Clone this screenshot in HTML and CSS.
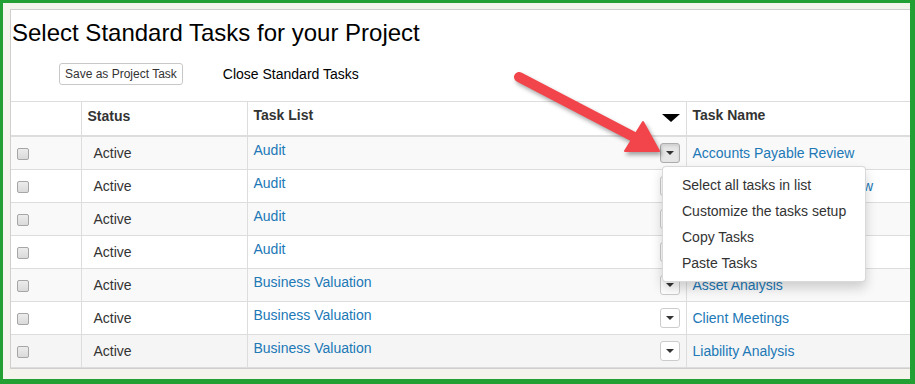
FILE: index.html
```html
<!DOCTYPE html>
<html lang="en">
<head>
    <meta charset="UTF-8">
    <meta name="viewport" content="width=device-width, initial-scale=1.0">
    <title>Select Standard Tasks</title>
    <link rel="stylesheet" href="styles.css">
</head>
<body>

    <div class="frame">
        <div class="panel">
            <h1 class="title">Select Standard Tasks for your Project</h1>

            <div class="toolbar">
                <button class="btn-save">Save as Project Task</button>
                <span class="close-link">Close Standard Tasks</span>
            </div>

            <table class="tasks">
                <colgroup>
                    <col class="col-check">
                    <col class="col-status">
                    <col class="col-list">
                    <col class="col-name">
                </colgroup>
                <thead>
                    <tr>
                        <th></th>
                        <th class="th-status">Status</th>
                        <th>Task List <span class="sort-icon"></span></th>
                        <th>Task Name</th>
                    </tr>
                </thead>
                <tbody>
                    <tr>
                        <td><input type="checkbox" class="check"></td>
                        <td class="status">Active</td>
                        <td class="list-cell">
                            <div class="list-inner">
                                <a href="#">Audit</a>
                                <span class="caret-btn is-open"><span class="caret"></span></span>
                            </div>
                        </td>
                        <td><a href="#">Accounts Payable Review</a></td>
                    </tr>
                    <tr>
                        <td><input type="checkbox" class="check"></td>
                        <td class="status">Active</td>
                        <td class="list-cell">
                            <div class="list-inner">
                                <a href="#">Audit</a>
                                <span class="caret-btn"><span class="caret"></span></span>
                            </div>
                        </td>
                        <td><a href="#">Accounts Receivable Review</a></td>
                    </tr>
                    <tr>
                        <td><input type="checkbox" class="check"></td>
                        <td class="status">Active</td>
                        <td class="list-cell">
                            <div class="list-inner">
                                <a href="#">Audit</a>
                                <span class="caret-btn"><span class="caret"></span></span>
                            </div>
                        </td>
                        <td><a href="#">Bank Reconciliation</a></td>
                    </tr>
                    <tr>
                        <td><input type="checkbox" class="check"></td>
                        <td class="status">Active</td>
                        <td class="list-cell">
                            <div class="list-inner">
                                <a href="#">Audit</a>
                                <span class="caret-btn"><span class="caret"></span></span>
                            </div>
                        </td>
                        <td><a href="#">Fixed Assets Review</a></td>
                    </tr>
                    <tr>
                        <td><input type="checkbox" class="check"></td>
                        <td class="status">Active</td>
                        <td class="list-cell">
                            <div class="list-inner">
                                <a href="#">Business Valuation</a>
                                <span class="caret-btn"><span class="caret"></span></span>
                            </div>
                        </td>
                        <td><a href="#">Asset Analysis</a></td>
                    </tr>
                    <tr>
                        <td><input type="checkbox" class="check"></td>
                        <td class="status">Active</td>
                        <td class="list-cell">
                            <div class="list-inner">
                                <a href="#">Business Valuation</a>
                                <span class="caret-btn"><span class="caret"></span></span>
                            </div>
                        </td>
                        <td><a href="#">Client Meetings</a></td>
                    </tr>
                    <tr class="is-hover">
                        <td><input type="checkbox" class="check"></td>
                        <td class="status">Active</td>
                        <td class="list-cell">
                            <div class="list-inner">
                                <a href="#">Business Valuation</a>
                                <span class="caret-btn"><span class="caret"></span></span>
                            </div>
                        </td>
                        <td><a href="#">Liability Analysis</a></td>
                    </tr>
                </tbody>
            </table>

            <!-- dropdown opened from the first row -->
            <ul class="menu">
                <li>Select all tasks in list</li>
                <li>Customize the tasks setup</li>
                <li>Copy Tasks</li>
                <li>Paste Tasks</li>
            </ul>
        </div>

        <!-- red callout arrow pointing at the dropdown -->
        <svg class="callout" width="915" height="384" viewBox="0 0 915 384">
            <g class="arrow">
                <line x1="519" y1="77" x2="634" y2="137" stroke="#f2454b" stroke-width="10" stroke-linecap="round"/>
                <polygon points="659,151 625,151 643,122" fill="#f2454b" stroke="#f2454b" stroke-width="2" stroke-linejoin="round"/>
            </g>
        </svg>
    </div>

</body>
</html>
```

FILE: styles.css
```css
* {
    box-sizing: border-box;
}
body {
    margin: 0;
    font-family: "Liberation Sans", Arial, sans-serif;
    font-size: 14px;
    color: #333;
}
.frame {
    position: relative;
    height: 384px;
    overflow: hidden;
    background-color: #f5f4ec;
    border-style: solid;
    border-color: #22a033;
    border-width: 3px 5px 5px 3px;
    padding: 6px 0 0 7px;
}
.panel {
    position: relative;
    width: 1000px;
    background-color: #ffffff;
    border: 1px solid #cfcfcf;
    border-right: none;
}
.title {
    margin: 0;
    padding: 9px 0 0 1px;
    font-size: 24px;
    line-height: 28px;
    font-weight: normal;
    color: #000;
}
.toolbar {
    display: flex;
    align-items: center;
    gap: 40px;
    margin: 16px 0 16px 48px;
}
.btn-save {
    height: 22px;
    padding: 0 5px;
    font-family: inherit;
    font-size: 12px;
    color: #333;
    background-color: #fff;
    border: 1px solid #c8c8c8;
    border-radius: 3px;
}
.close-link {
    color: #000;
    font-size: 14px;
}

/* table */
.tasks {
    border-collapse: collapse;
    table-layout: fixed;
    width: 975px;
}
.col-check { width: 70px; }
.col-status { width: 166px; }
.col-list { width: 439px; }
.col-name { width: 300px; }
.tasks th,
.tasks td {
    border: 1px solid #dddddd;
    text-align: left;
    vertical-align: top;
    line-height: 20px;
    white-space: nowrap;
}
.tasks tr > :first-child {
    border-left: none;
}
.tasks th {
    padding: 3px 6px 10px;
    font-weight: bold;
    color: #333;
    border-bottom: 2px solid #dddddd;
}
.tasks .th-status {
    padding-top: 4px;
    padding-bottom: 9px;
}
.sort-icon {
    float: right;
    margin-top: 9px;
    width: 0;
    height: 0;
    border-top: 8px solid #000;
    border-left: 9px solid transparent;
    border-right: 9px solid transparent;
}
.tasks td {
    padding: 6px;
}
.tasks tbody tr:nth-child(odd) {
    background-color: #f9f9f9;
}
.tasks tbody tr.is-hover {
    background-color: #f5f5f5;
}
.tasks a {
    color: #2078b6;
    text-decoration: none;
}
.tasks td.status {
    padding-left: 12px;
}
.tasks td.list-cell {
    padding: 3px 6px 6px;
}
.list-inner {
    display: flex;
    justify-content: space-between;
    align-items: flex-start;
}
.caret-btn {
    display: flex;
    align-items: center;
    justify-content: center;
    width: 20px;
    height: 20px;
    margin-top: 3px;
    background-color: #fff;
    border: 1px solid #cccccc;
    border-radius: 3px;
}
.caret-btn.is-open {
    background-color: #e6e6e6;
    border-color: #adadad;
    box-shadow: inset 0 2px 3px rgba(0, 0, 0, 0.1);
}
.caret {
    width: 0;
    height: 0;
    border-top: 4px solid #333;
    border-left: 4px solid transparent;
    border-right: 4px solid transparent;
}
.check {
    appearance: none;
    display: block;
    width: 12px;
    height: 12px;
    margin: 5px 0 0;
    border: 1px solid #a6a6a6;
    border-radius: 2px;
    background: linear-gradient(#ececec, #dadada);
}

/* dropdown menu */
.menu {
    position: absolute;
    left: 651px;
    top: 156px;
    width: 204px;
    margin: 0;
    padding: 5px 0;
    list-style: none;
    background-color: #fff;
    border: 1px solid rgba(0, 0, 0, 0.15);
    border-radius: 4px;
    box-shadow: 0 6px 12px rgba(0, 0, 0, 0.175);
}
.menu li {
    padding: 3px 19px;
    line-height: 20px;
    color: #333;
    white-space: nowrap;
}

.callout {
    position: absolute;
    left: -3px;
    top: -3px;
    pointer-events: none;
}
.arrow {
    filter: drop-shadow(2px 3px 2px rgba(0, 0, 0, 0.35));
}
```
